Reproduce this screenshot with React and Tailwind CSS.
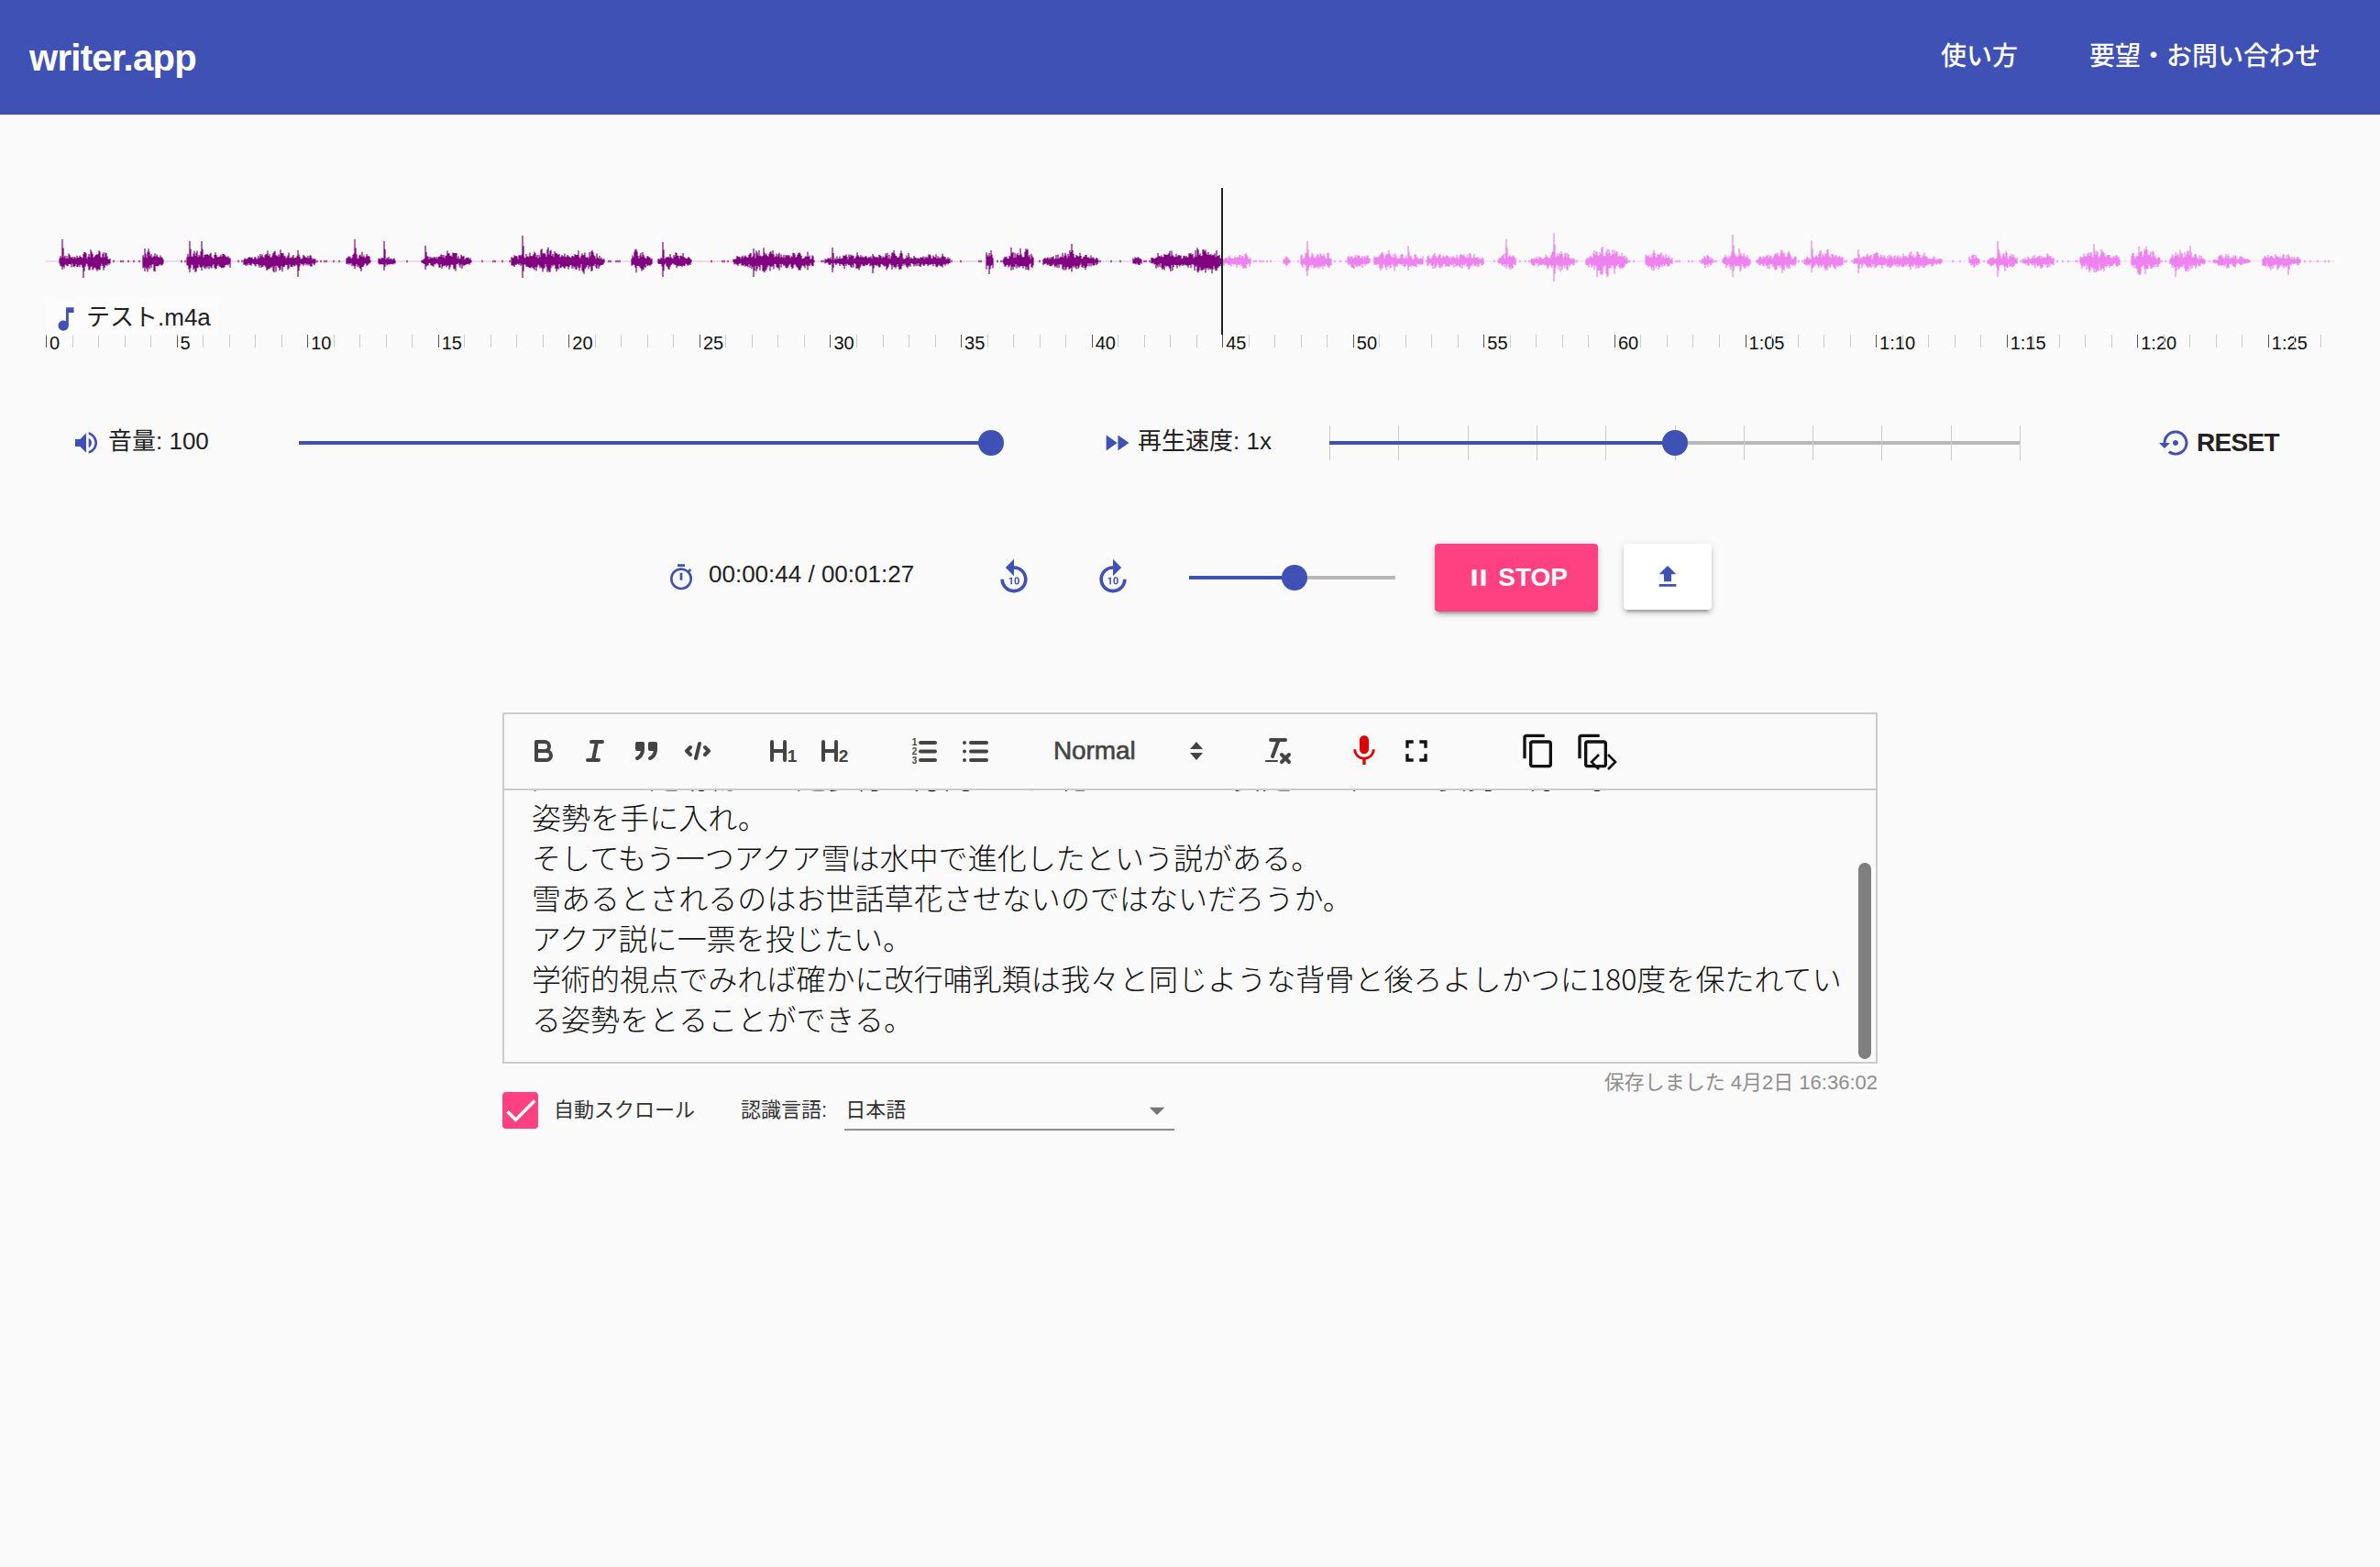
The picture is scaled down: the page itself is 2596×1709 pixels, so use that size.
import {
  MdVolumeUp,
  MdFastForward,
  MdSettingsBackupRestore,
  MdOutlineTimer,
  MdReplay10,
  MdForward10,
  MdPause,
  MdFileUpload,
  MdMusicNote,
  MdContentCopy,
  MdMic,
  MdFullscreen,
  MdCheck,
  MdArrowDropDown,
} from 'react-icons/md';

// seeded random so the wave form is the same on every load
function makeRandom(seed) {
  let s = seed;
  return () => {
    s = (s + 0x6d2b79f5) | 0;
    let t = Math.imul(s ^ (s >>> 15), 1 | s);
    t = (t + Math.imul(t ^ (t >>> 7), 61 | t)) ^ t;
    return ((t ^ (t >>> 14)) >>> 0) / 4294967296;
  };
}

const PLAYHEAD = 1333;
const CENTER = 80;

const left = (z) => z * 0.829;
const right = (z) => 1300 + z * 0.8265;

const bursts = [
  ...[[78, 145, 10], [187, 215, 10], [245, 303, 11], [320, 415, 9], [455, 487, 8], [497, 520, 6], [556, 620, 8], [672, 795, 11], [830, 858, 10], [865, 910, 7], [965, 1070, 10], [1085, 1250, 8], [1297, 1307, 9], [1320, 1360, 11], [1372, 1445, 9], [1490, 1503, 6], [1515, 1568, 9]].map(([a, b, c]) => [left(a), left(b), c]),
  ...[[-10, 40, 12], [40, 78, 8], [120, 130, 5], [143, 185, 11], [205, 235, 9], [240, 305, 9], [310, 385, 8], [405, 428, 8], [447, 505, 9], [520, 575, 12], [598, 635, 9], [672, 688, 7], [700, 738, 9], [745, 798, 9], [808, 860, 9], [873, 990, 8], [1025, 1040, 7], [1050, 1090, 8], [1095, 1138, 7], [1172, 1225, 11], [1240, 1278, 12], [1290, 1337, 9], [1348, 1396, 6], [1412, 1463, 8]].map(([a, b, c]) => [right(a), right(b), c]),
];

const spikes = [
  ...[[82, 24, 9], [110, 6, 18], [190, 14, 11], [250, 22, 12], [265, 22, 10], [392, 12, 17], [467, 24, 8], [505, 22, 10], [560, 17, 9], [687, 28, 18], [872, 21, 17], [992, 14, 17], [1095, 15, 12], [1148, 8, 13], [1302, 9, 14], [1330, 15, 10], [1410, 19, 9]].map(([x, u, d]) => [left(x), u, d]),
  ...[[152, 22, 16], [285, 17, 10], [415, 24, 8], [478, 31, 22], [535, 10, 17], [714, 29, 17], [818, 23, 12], [880, 13, 13], [1063, 22, 17], [1190, 19, 12], [1250, 16, 15], [1298, 10, 17], [1318, 17, 9], [1447, 8, 15]].map(([x, u, d]) => [right(x), u, d]),
];

function buildWave() {
  const rand = makeRandom(42);
  let played = '';
  let rest = '';
  const add = (x, up, down) => {
    const seg = `M${x} ${(CENTER - up).toFixed(1)}V${(CENTER + down).toFixed(1)}`;
    if (x < PLAYHEAD) played += seg;
    else rest += seg;
  };
  for (const [a, b, amp] of bursts) {
    for (let x = Math.ceil(a); x <= b; x++) {
      const t = (x - a) / (b - a);
      const env = 0.4 + 0.6 * Math.sqrt(Math.max(0, Math.sin(Math.PI * t)));
      // syllables: quick swells inside each word
      const swell = 0.45 + 0.55 * Math.abs(Math.sin(x * 0.41 + a)) * (0.6 + 0.4 * Math.sin(x * 0.13));
      const up = 1.35 * amp * env * swell * (0.4 + 0.8 * rand());
      const down = 1.25 * amp * env * swell * (0.4 + 0.8 * rand());
      add(x, up, down);
    }
  }
  for (const [x, up, down] of spikes) {
    add(Math.round(x), up, down);
    add(Math.round(x) + 1, up * 0.6, down * 0.6);
  }
  // tiny noise between the words
  for (let x = 50; x < 2546; x += 2) {
    if (rand() < 0.3) add(x, 1.2, 1.2);
  }
  return { played, rest };
}

const wave = buildWave();

function timeLabel(sec) {
  if (sec % 5 !== 0 || sec > 85) return null;
  if (sec <= 60) return String(sec);
  return `1:${String(sec - 60).padStart(2, '0')}`;
}

function Ruler() {
  const seconds = Array.from({ length: 88 }, (_, i) => i);
  return (
    <div className="flex pl-[50px] h-[17px]">
      {seconds.map((sec) => {
        const label = timeLabel(sec);
        return (
          <div
            key={sec}
            className={`w-[28.52px] shrink-0 h-[14px] border-l ${label ? 'border-[#555]' : 'border-[#ccc]'}`}
          >
            {label && (
              <span className="block pl-[3px] whitespace-nowrap text-[20px] leading-[18px] text-[#111]">{label}</span>
            )}
          </div>
        );
      })}
    </div>
  );
}

function Slider({ value, className, ticks }) {
  return (
    <div className={`relative h-1 shrink-0 bg-[#b8b8b8] ${className}`}>
      {ticks &&
        Array.from({ length: ticks + 1 }, (_, i) => (
          <div
            key={i}
            className="absolute top-[-17px] h-[38px] w-px bg-[#ccc]"
            style={{ left: `${(i / ticks) * 100}%` }}
          />
        ))}
      <div className="absolute left-0 top-0 h-1 bg-[#3f51b5]" style={{ width: `${value}%` }} />
      <div
        className="absolute top-[-12px] w-7 h-7 -ml-3.5 rounded-full bg-[#3f51b5]"
        style={{ left: `${value}%` }}
      />
    </div>
  );
}

function QuillIcon({ children }) {
  return (
    <svg
      viewBox="0 0 18 18"
      className="w-9 h-9 text-[#444]"
      fill="none"
      stroke="currentColor"
      strokeWidth="2"
      strokeLinecap="round"
      strokeLinejoin="round"
    >
      {children}
    </svg>
  );
}

function ToolButton({ children, className = '' }) {
  return <button className={`w-14 h-9 shrink-0 flex items-center justify-center ${className}`}>{children}</button>;
}

const digit = { fontFamily: 'Liberation Sans', fontWeight: 700, fill: 'currentColor', stroke: 'none' };

function Toolbar() {
  return (
    <div className="flex items-center h-[83px] shrink-0 border-b-2 border-[#ccc] pl-[15px] pb-[2px]">
      <ToolButton>
        <QuillIcon>
          <path d="M5,4H9.5A2.5,2.5,0,0,1,12,6.5v0A2.5,2.5,0,0,1,9.5,9H5V4Z" />
          <path d="M5,9h5.5A2.5,2.5,0,0,1,13,11.5v0A2.5,2.5,0,0,1,10.5,14H5V9Z" />
        </QuillIcon>
      </ToolButton>
      <ToolButton>
        <QuillIcon>
          <path d="M7 4H13M5 14H11M8 14L10 4" />
        </QuillIcon>
      </ToolButton>
      <ToolButton>
        <QuillIcon>
          <rect x="4" y="5" width="3" height="3" fill="currentColor" />
          <rect x="11" y="5" width="3" height="3" fill="currentColor" />
          <path d="M7,8c0,4.031-3,5-3,5" />
          <path d="M14,8c0,4.031-3,5-3,5" />
        </QuillIcon>
      </ToolButton>
      <ToolButton>
        <QuillIcon>
          <path d="M5 7L3 9L5 11M13 7L15 9L13 11M10 5L8 13" />
        </QuillIcon>
      </ToolButton>

      <ToolButton className="ml-[39px]">
        <QuillIcon>
          <path d="M2 4V14M9 4V14M2 9H9" />
          <text x="10.4" y="15" fontSize="9.5" style={digit}>1</text>
        </QuillIcon>
      </ToolButton>
      <ToolButton>
        <QuillIcon>
          <path d="M2 4V14M9 4V14M2 9H9" />
          <text x="10.4" y="15" fontSize="9.5" style={digit}>2</text>
        </QuillIcon>
      </ToolButton>

      <ToolButton className="ml-10">
        <QuillIcon>
          <path d="M7 4.5H15M7 9.2H15M7 14H15" />
          <text x="2.4" y="6.2" fontSize="5" style={digit}>1</text>
          <text x="2.4" y="11.2" fontSize="5" style={digit}>2</text>
          <text x="2.4" y="16.2" fontSize="5" style={digit}>3</text>
        </QuillIcon>
      </ToolButton>
      <ToolButton>
        <QuillIcon>
          <path d="M6.5 4.5H15M6.5 9.2H15M6.5 14H15M3 4.5H3.01M3 9.2H3.01M3 14H3.01" />
        </QuillIcon>
      </ToolButton>

      <div className="ml-[57px] w-[164px] flex items-center justify-between">
        <span className="text-[28px] font-medium text-[#444] tracking-[-0.1px] [-webkit-text-stroke:0.6px_#444]">Normal</span>
        <svg viewBox="0 0 16 22" className="w-4 h-[22px] text-[#444]" fill="currentColor">
          <path d="M1 9L8 1L15 9Z" />
          <path d="M1 13L8 21L15 13Z" />
        </svg>
      </div>

      <ToolButton className="ml-[53px]">
        <QuillIcon>
          <path d="M5 3H13M6 12L9.35 3M11 11L15 15M15 11L11 15" />
          <rect x="2" y="14" width="7" height="1" rx="0.5" fill="currentColor" stroke="none" />
        </QuillIcon>
      </ToolButton>
      <ToolButton className="ml-[38px]">
        <MdMic className="w-10 h-10 text-[#e00000]" />
      </ToolButton>
      <ToolButton className="ml-px">
        <MdFullscreen className="w-10 h-10 text-[#111]" />
      </ToolButton>
      <ToolButton className="ml-[77px]">
        <MdContentCopy className="w-10 h-10 text-[#111]" />
      </ToolButton>
      <ToolButton className="ml-2 relative">
        <MdContentCopy className="w-10 h-10 text-[#111] -ml-2" />
        <svg
          viewBox="0 0 30 18"
          className="absolute left-[20px] top-[21px] w-[30px] h-[18px] text-[#111]"
          fill="none"
          stroke="currentColor"
          strokeWidth="2.6"
        >
          <path d="M10 1L2 9L10 17M20 1L28 9L20 17" />
        </svg>
      </ToolButton>
    </div>
  );
}

const lines = [
  '陸上の四足動物が二足歩行の方向へと進化して、より安定した直立の姿勢を得る事が',
  '姿勢を手に入れ。',
  'そしてもう一つアクア雪は水中で進化したという説がある。',
  '雪あるとされるのはお世話草花させないのではないだろうか。',
  'アクア説に一票を投じたい。',
  '学術的視点でみれば確かに改行哺乳類は我々と同じような背骨と後ろよしかつに180度を保たれている姿勢をとることができる。',
];

export default function App() {
  return (
    <div className="min-h-screen bg-[#fafafa] font-['Liberation_Sans','Noto_Sans_CJK_JP',sans-serif] text-[#212121] overflow-hidden">
      <header className="h-[125px] bg-[#3f51b5] flex items-center justify-between pl-8 pr-[65px] text-white">
        <div className="text-[40px] font-bold tracking-[-0.7px]">writer.app</div>
        <nav className="flex gap-[78px] text-[28px] font-medium -mt-[2px]">
          <a>使い方</a>
          <a>要望・お問い合わせ</a>
        </nav>
      </header>

      <section className="relative mt-20">
        <svg viewBox="0 0 2596 160" className="block w-full h-[160px]">
          <path d={`M50 ${CENTER}H${PLAYHEAD}`} stroke="#e8cfe8" strokeWidth="1.5" />
          <path d={`M${PLAYHEAD} ${CENTER}H2546`} stroke="#f8e0f8" strokeWidth="1.5" />
          <path d={wave.played} stroke="#800080" strokeWidth="1.2" fill="none" />
          <path d={wave.rest} stroke="#ee82ee" strokeWidth="1.2" fill="none" />
        </svg>
        <div className="absolute left-[1332px] top-0 h-40 w-[2px] bg-[#222]" />
        <div className="absolute left-[50px] top-[120px] w-[188px] h-[42px] bg-white/40 flex items-center pl-2 gap-[8px]">
          <MdMusicNote className="w-[34px] h-[34px] -mx-[3px] text-[#3f51b5] shrink-0 mt-1" />
          <span className="text-[26px] leading-none whitespace-nowrap">テスト.m4a</span>
        </div>
        <Ruler />
      </section>

      <div className="flex items-center h-10 mt-[81px] pl-[78px]">
        <div className="flex items-center w-[248px] shrink-0">
          <MdVolumeUp className="w-8 h-8 text-[#3f51b5] mr-2" />
          <span className="text-[26px] -mt-1">音量: 100</span>
        </div>
        <Slider value={100} className="w-[755px]" />
        <div className="ml-[120px] w-[249px] shrink-0 flex items-center">
          <MdFastForward className="w-[34px] h-[34px] text-[#3f51b5] mr-[6px]" />
          <span className="text-[26px] -mt-1 whitespace-nowrap">再生速度: 1x</span>
        </div>
        <Slider value={50} ticks={10} className="w-[753px]" />
        <div className="ml-[152px] flex items-center gap-[5px]">
          <MdSettingsBackupRestore className="w-9 h-9 text-[#3f51b5]" />
          <span className="text-[28px] font-bold text-[#222] tracking-[-0.7px]">RESET</span>
        </div>
      </div>

      <div className="flex items-center h-[74px] mt-[90px] pl-[727px]">
        <MdOutlineTimer className="w-8 h-8 text-[#3f51b5] mr-[14px]" />
        <span className="text-[26px] -mt-2 whitespace-nowrap">00:00:44 / 00:01:27</span>
        <MdReplay10 className="w-11 h-11 ml-[87px] text-[#3f51b5]" />
        <MdForward10 className="w-11 h-11 ml-[64px] text-[#3f51b5]" />
        <Slider value={51} className="w-[225px] ml-[61px]" />
        <button className="ml-[43px] w-[178px] h-[74px] rounded bg-[#ff4081] text-white text-[28px] font-bold flex items-center justify-center gap-[6px] shadow-[0_6px_2px_-4px_rgba(0,0,0,0.2),0_4px_4px_0_rgba(0,0,0,0.14),0_2px_10px_0_rgba(0,0,0,0.12)]">
          <MdPause className="w-[30px] h-[30px]" />
          STOP
        </button>
        <button className="ml-7 w-24 h-[72px] -mt-0.5 rounded bg-white flex items-center justify-center shadow-[0_6px_2px_-4px_rgba(0,0,0,0.2),0_4px_4px_0_rgba(0,0,0,0.14),0_2px_10px_0_rgba(0,0,0,0.12)]">
          <MdFileUpload className="w-8 h-8 text-[#3f51b5]" />
        </button>
      </div>

      <main className="w-[1500px] ml-[548px] mt-[110px]">
        <div className="h-[383px] border-2 border-[#ccc] flex flex-col">
          <Toolbar />
          <div className="relative flex-1 overflow-hidden flex flex-col justify-end pb-[26px] pl-[30px] pr-[33px] font-['Noto_Sans_CJK_JP',sans-serif] font-light text-[32px] leading-[44px] tracking-[0.05px] text-[#111]">
            {lines.map((line) => (
              <p key={line} className="shrink-0">{line}</p>
            ))}
            <div className="absolute right-[5px] top-[79px] w-[14px] h-[214px] rounded-[7px] bg-[#7f7f7f]" />
          </div>
        </div>
        <p className="h-[31px] text-right text-[22px] leading-[42px] text-[#8f8f8f]">保存しました 4月2日 16:36:02</p>
        <div className="flex items-start text-[22px] text-[#333]">
          <div className="w-[39px] h-10 rounded bg-[#ff4081] flex items-center justify-center">
            <MdCheck className="w-11 h-11 shrink-0 text-white" />
          </div>
          <span className="ml-[17px] leading-10">自動スクロール</span>
          <span className="ml-[50px] leading-10">認識言語:</span>
          <div className="ml-[19px] w-[360px] h-[42px] border-b-2 border-[#8f8f8f] flex items-center justify-between pl-px">
            <span className="leading-10">日本語</span>
            <MdArrowDropDown className="w-10 h-10 text-[#757575] -mr-[1px]" />
          </div>
        </div>
      </main>
    </div>
  );
}
